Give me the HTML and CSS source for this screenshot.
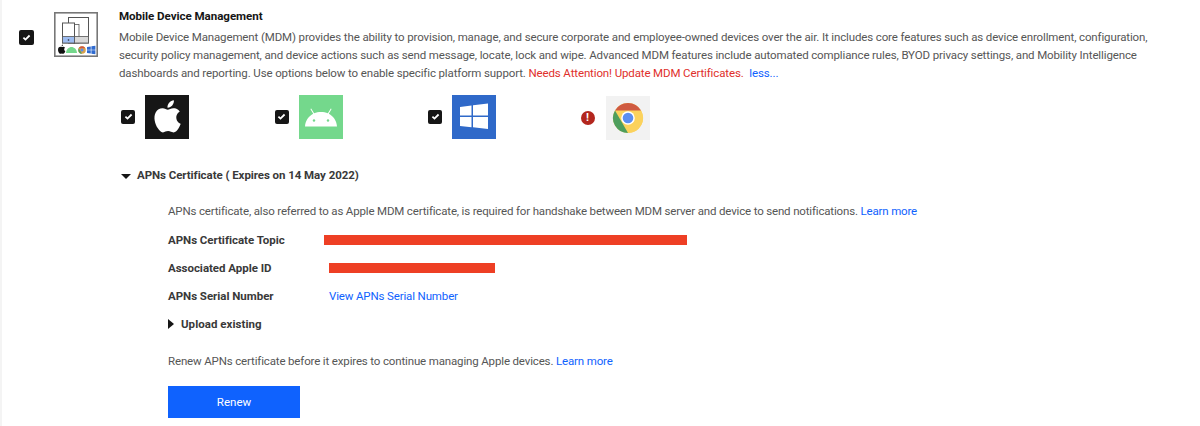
FILE: index.html
```html
<!DOCTYPE html>
<html lang="en">
<head>
<meta charset="utf-8">
<title>Mobile Device Management</title>
<link rel="stylesheet" href="styles.css">
</head>
<body>
<main class="page">
  <div class="lead-check">
    <span class="check"><svg viewBox="0 0 16 16" class="tick"><path d="M3.500 8.300l3 2.800 6-6" /></svg></span>
  </div>
  <div class="mdm-logo">
    <svg viewBox="0 0 44 45" width="44" height="45">
      <rect x="0.800" y="0.800" width="42.400" height="43.400" fill="#fff" stroke="#777" stroke-width="1.600"/>
      <rect x="14.500" y="5.500" width="20" height="25.500" fill="#fff" stroke="#555"/>
      <rect x="20" y="12.500" width="5" height="18.500" fill="#fff" stroke="#555" stroke-width="0.800"/>
      <rect x="20" y="24.500" width="14.500" height="6.500" fill="#d9d9d9" stroke="#555" stroke-width="0.800"/>
      <rect x="8.500" y="11" width="12" height="20" fill="#fff" stroke="#555"/>
      <rect x="8.500" y="24.500" width="12" height="6.500" fill="#9dbcf0" stroke="#555" stroke-width="0.800"/>
      <circle cx="14.500" cy="28" r="0.800" fill="#223"/>
      <path d="M4 38c0-2 1-3.200 2.500-3.200.5 0 .8.300 1.200.300s1-.300 1.600-.300c.7 0 1.300.400 1.700 1-1.300.900-1 2.900.300 3.500-.5 1.300-1.200 2.500-2 2.500-.6 0-.9-.300-1.500-.300s-.9.300-1.500.300C5.200 41.800 4 39.800 4 38z" fill="#111"/>
      <path d="M7.500 34.500c0-1 .7-1.800 1.500-2 .1 1-.6 1.800-1.500 2z" fill="#111"/>
      <path d="M12 41c.1-3.800 3-6 5.500-6s5.400 2.200 5.500 6z" fill="#74d88c"/>
      <circle cx="28" cy="38" r="3.800" fill="#d9a24a"/>
      <path d="M24.700 36.200a3.800 3.800 0 0 1 6.600 0H28z" fill="#d0563f"/>
      <path d="M28 41.800a3.800 3.800 0 0 1-3.300-5.600l1.800 3z" fill="#4f9e5f"/>
      <circle cx="28" cy="38" r="1.500" fill="#5a8df0"/>
      <path d="M33 35l3.800-.6v3.300H33zM37.400 34.300l4-.6v4h-4zM33 38.300h3.800v3.200L33 41zM37.400 38.300h4v4l-4-.6z" fill="#2f6bd0"/>
    </svg>
  </div>
  <section class="content">
    <h1 class="title">Mobile Device Management</h1>
    <p class="desc">Mobile Device Management (MDM) provides the ability to provision, manage, and secure corporate and employee-owned devices over the air. It includes core features such as device enrollment, configuration, security policy management, and device actions such as send message, locate, lock and wipe. Advanced MDM features include automated compliance rules, BYOD privacy settings, and Mobility Intelligence dashboards and reporting. Use options below to enable specific platform support. <span class="alert">Needs Attention! Update MDM Certificates.</span> <a class="link less" href="#">less...</a></p>

    <div class="platforms">
      <div class="platform">
        <span class="check small"><svg viewBox="0 0 16 16" class="tick"><path d="M3.500 8.300l3 2.800 6-6" /></svg></span>
        <span class="tile tile-apple">
          <svg viewBox="6 5.600 34.600 34.600" width="44" height="44"><path fill="#fff" d="M30.600 23.300c0-3.200 2.600-4.700 2.700-4.800-1.500-2.200-3.800-2.500-4.600-2.500-2-.2-3.800 1.200-4.800 1.200s-2.500-1.200-4.200-1.100c-2.100 0-4.100 1.200-5.200 3.100-2.200 3.800-.6 9.500 1.600 12.600 1.100 1.500 2.300 3.200 4 3.200 1.600-.1 2.200-1 4.100-1s2.500 1 4.200 1c1.700 0 2.800-1.500 3.900-3.100 1.200-1.800 1.700-3.500 1.800-3.600-.1 0-3.500-1.300-3.500-5z"/><path fill="#fff" d="M27.400 13.900c.9-1.100 1.500-2.600 1.300-4.100-1.300.1-2.800.9-3.700 1.900-.8.900-1.500 2.500-1.300 3.900 1.400.1 2.800-.7 3.700-1.700z"/></svg>
        </span>
      </div>
      <div class="platform">
        <span class="check small"><svg viewBox="0 0 16 16" class="tick"><path d="M3.500 8.300l3 2.800 6-6" /></svg></span>
        <span class="tile tile-android">
          <svg viewBox="0 0 44 44" width="44" height="44"><path fill="#fff" d="M6 31.500c.4-6 3.700-10.500 8.200-12.800l-2.800-4.800.8-.5 2.900 4.900c2.100-.9 4.500-1.400 6.900-1.400s4.800.5 6.900 1.400l2.900-4.900.8.500-2.800 4.800c4.500 2.300 7.800 6.800 8.200 12.800z"/><circle cx="15" cy="25.500" r="1.200" fill="#74d88c"/><circle cx="29" cy="25.500" r="1.200" fill="#74d88c"/></svg>
        </span>
      </div>
      <div class="platform">
        <span class="check small"><svg viewBox="0 0 16 16" class="tick"><path d="M3.500 8.300l3 2.800 6-6" /></svg></span>
        <span class="tile tile-windows">
          <svg viewBox="0 0 44 44" width="44" height="44"><path fill="#fff" d="M8 12l11.500-1.500v10H8zM21 10.300L36 8.500v12H21zM8 22h11.500v10.300L8 31zM21 22h15v12l-15-1.700z"/></svg>
        </span>
      </div>
      <div class="platform platform-chrome">
        <span class="warn">!</span>
        <span class="tile tile-chrome">
          <svg viewBox="0 0 44 44" width="44" height="44"><circle cx="22" cy="22" r="15" fill="#fbd25d"/><path d="M9 14.500A15 15 0 0 1 35 14.500H22z" fill="#cf5a41"/><path d="M22 37A15 15 0 0 1 9 14.500L16 26.500z" fill="#4e9e5d"/><path d="M22 37l6.500-11.200 6.500-11.300A15 15 0 0 1 22 37z" fill="#fbd25d"/><circle cx="22" cy="22" r="6.800" fill="#fff"/><circle cx="22" cy="22" r="5.300" fill="#5b8ef0"/></svg>
        </span>
      </div>
    </div>

    <div class="cert-head"><span class="caret-down"></span><span>APNs Certificate ( Expires on 14 May 2022)</span></div>

    <div class="cert-body">
      <p class="cert-intro">APNs certificate, also referred to as Apple MDM certificate, is required for handshake between MDM server and device to send notifications. <a class="link" href="#">Learn more</a></p>
      <dl class="facts">
        <div class="fact"><dt>APNs Certificate Topic</dt><dd class="redact redact-topic"></dd></div>
        <div class="fact"><dt>Associated Apple ID</dt><dd class="redact redact-id"></dd></div>
        <div class="fact"><dt>APNs Serial Number</dt><dd class="serial"><a class="link" href="#">View APNs Serial Number</a></dd></div>
      </dl>
      <div class="upload"><span class="caret-right"></span><span>Upload existing</span></div>
      <p class="renew-note">Renew APNs certificate before it expires to continue managing Apple devices. <a class="link" href="#">Learn more</a></p>
      <button class="renew" type="button">Renew</button>
    </div>
  </section>
</main>
</body>
</html>
```
FILE: styles.css
```css
* { box-sizing: border-box; }
html, body { margin: 0; height: 100%; background: #fff; overflow: hidden; }
body { font-family: Roboto, "Noto Sans", sans-serif; font-size: 11.500px; letter-spacing: -0.140px; color: #565656; border-left: 2px solid #f4f4f4; }
.page { display: flex; align-items: flex-start; padding-top: 10px; }
.lead-check { width: 52px; padding: 20px 0 0 17px; }
.mdm-logo { width: 65px; padding-top: 2px; }
.mdm-logo svg { display: block; }
.content { width: 1040px; margin-top: -1px; }
.title { margin: 0; font-size: 11.600px; line-height: 14px; font-weight: 700; letter-spacing: -0.060px; color: #161616; }
.desc { margin: 5px 0 0; line-height: 18px; letter-spacing: -0.128px; }
.alert { color: #e0302b; }
.link { color: #0f62fe; text-decoration: none; }
.less { margin-left: 3px; }
.check { display: flex; align-items: center; justify-content: center; width: 15px; height: 15px; background: #161616; border-radius: 2px; }
.small { width: 14px; height: 14px; }
.tick { width: 11px; height: 11px; fill: none; stroke: #fff; stroke-width: 2.600; }
.platforms { display: flex; margin-top: 12px; height: 45px; }
.platform { display: flex; align-items: center; gap: 10px; width: 153.500px; padding-left: 2px; }
.platform-chrome { gap: 11px; padding-left: 1px; margin-top: 2px; }
.tile { display: block; width: 44px; height: 44px; }
.tile svg { display: block; }
.tile-apple { background: #161616; }
.tile-android { background: #74d88c; }
.tile-windows { background: #2f69c9; }
.tile-chrome { background: #f2f2f2; }
.warn { display: flex; align-items: center; justify-content: center; width: 14px; height: 14px; border-radius: 50%; background: #b3261e; color: #fff; font-size: 11px; font-weight: 700; }
.cert-head { display: flex; align-items: center; gap: 6px; margin-top: 27px; line-height: 18px; font-weight: 700; letter-spacing: -0.060px; color: #393939; }
.caret-down { width: 0; height: 0; border-left: 5px solid transparent; border-right: 5px solid transparent; border-top: 5px solid #161616; margin: 2px 0 0 2px; }
.cert-body { padding: 18px 0 0 49px; }
.cert-intro { margin: 0; line-height: 18px; letter-spacing: -0.165px; }
.facts { margin: 6px 0 0; }
.fact { display: flex; align-items: center; height: 28px; }
.fact dt { width: 161px; font-weight: 700; letter-spacing: -0.030px; color: #393939; }
.fact dd { margin: 0; }
.redact { background: #ee3f24; height: 10px; }
.redact-topic { width: 363px; margin-left: -5px !important; }
.redact-id { width: 166px; }
.upload { display: flex; align-items: center; gap: 7px; height: 28px; font-weight: 700; letter-spacing: 0.040px; color: #393939; }
.caret-right { width: 0; height: 0; border-top: 5px solid transparent; border-bottom: 5px solid transparent; border-left: 6px solid #161616; }
.renew-note { margin: 14px 0 0; line-height: 18px; letter-spacing: -0.150px; }
.renew { display: block; width: 132px; height: 32px; margin-top: 16px; border: 0; background: #0f62fe; color: #fff; font: inherit; letter-spacing: 0; }
```
